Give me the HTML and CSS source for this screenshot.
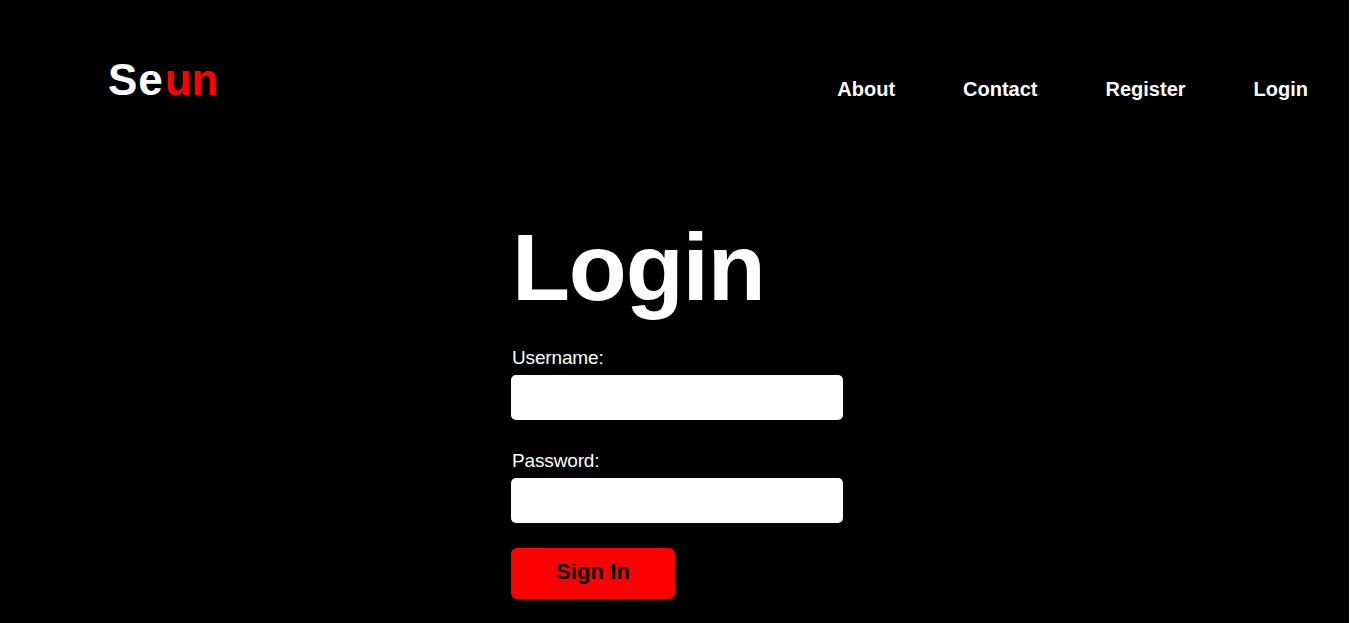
FILE: index.html
```html
<!DOCTYPE html>
<html lang="en">
<head>
    <meta charset="UTF-8">
    <meta name="viewport" content="width=device-width, initial-scale=1.0">
    <title>Login</title>
    <link rel="stylesheet" href="styles.css">
</head>
<body>
    <header class="header">
        <a href="index.html" class="logo">Se<span>un</span></a>
        <nav class="navbar">
            <a href="#about">About</a>
            <a href="#contact">Contact</a>
            <a href="#register">Register</a>
            <a href="#login">Login</a>
        </nav>
    </header>
    <main class="login">
        <h1>Login</h1>
        <form>
            <label for="username">Username:</label>
            <input type="text" id="username" name="username">
            <label for="password">Password:</label>
            <input type="password" id="password" name="password">
            <button type="submit">Sign In</button>
        </form>
    </main>
</body>
</html>
```
FILE: styles.css
```css
* {
    margin: 0;
    padding: 0;
    box-sizing: border-box;
}
html {
    background-color: #000;
}
body {
    min-height: 100vh;
    border-right: 1px solid #fff;
    background-color: #000;
    color: #fff;
    font-family: "Liberation Sans", Arial, sans-serif;
}
.header {
    display: flex;
    justify-content: space-between;
    padding: 54px 41px 0 108px;
    height: 211px;
}
.header a {
    color: #fff;
    font-weight: bold;
    text-decoration: none;
}
.logo {
    font-size: 44px;
    line-height: 52px;
    letter-spacing: 0.9px;
}
.logo span {
    margin-left: 1px;
    color: red;
    letter-spacing: 0;
}
.navbar {
    display: flex;
    gap: 68px;
    padding-top: 24px;
}
.navbar a {
    font-size: 20px;
    line-height: 23px;
}
.login {
    width: 332px;
    margin-left: 511px;
}
.login h1 {
    padding-left: 1px;
    font-size: 95px;
    line-height: 112px;
    letter-spacing: -1.2px;
    margin-bottom: 24px;
}
.login label {
    display: block;
    padding-left: 1px;
    font-size: 19px;
    line-height: 22px;
    letter-spacing: -0.15px;
    margin-bottom: 6px;
}
.login input {
    display: block;
    width: 100%;
    height: 45px;
    padding: 0 10px;
    border: none;
    border-radius: 5px;
    margin-bottom: 30px;
    font-size: 18px;
}
.login button {
    display: block;
    width: 164px;
    height: 51px;
    margin-top: -5px;
    padding-bottom: 3px;
    border: none;
    border-radius: 6px;
    background-color: red;
    color: #000;
    font-family: inherit;
    font-size: 22px;
    font-weight: bold;
    letter-spacing: 0.1px;
}
```
